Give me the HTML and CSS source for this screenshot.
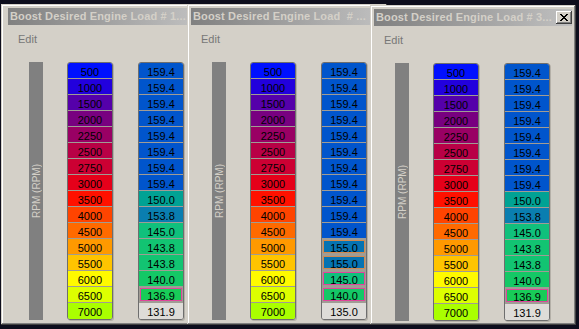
FILE: index.html
```html
<!DOCTYPE html>
<html lang="en">
<head>
    <meta charset="UTF-8">
    <title>Boost Desired Engine Load</title>
    <link rel="stylesheet" href="styles.css">
</head>
<body>

<!-- window 1 -->
<div class="window win1">
    <div class="title"><span class="caption">Boost Desired Engine Load # 1...</span></div>
    <div class="menu">Edit</div>
    <div class="table">
        <div class="axis"><span>RPM (RPM)</span></div>
        <div class="col">
            <div class="cell c500">500</div>
            <div class="cell c1000">1000</div>
            <div class="cell c1500">1500</div>
            <div class="cell c2000">2000</div>
            <div class="cell c2250">2250</div>
            <div class="cell c2500">2500</div>
            <div class="cell c2750">2750</div>
            <div class="cell c3000">3000</div>
            <div class="cell c3500">3500</div>
            <div class="cell c4000">4000</div>
            <div class="cell c4500">4500</div>
            <div class="cell c5000">5000</div>
            <div class="cell c5500">5500</div>
            <div class="cell c6000">6000</div>
            <div class="cell c6500">6500</div>
            <div class="cell c7000">7000</div>
        </div>
        <div class="col">
            <div class="cell v1594">159.4</div>
            <div class="cell v1594">159.4</div>
            <div class="cell v1594">159.4</div>
            <div class="cell v1594">159.4</div>
            <div class="cell v1594">159.4</div>
            <div class="cell v1594">159.4</div>
            <div class="cell v1594">159.4</div>
            <div class="cell v1594">159.4</div>
            <div class="cell v1500">150.0</div>
            <div class="cell v1538">153.8</div>
            <div class="cell v1450">145.0</div>
            <div class="cell v1438">143.8</div>
            <div class="cell v1438">143.8</div>
            <div class="cell v1400">140.0</div>
            <div class="cell v1369 pink">136.9</div>
            <div class="cell vlow">131.9</div>
        </div>
    </div>
</div>

<!-- window 2 -->
<div class="window win2">
    <div class="title"><span class="caption">Boost Desired Engine Load &nbsp;# ...</span></div>
    <div class="menu">Edit</div>
    <div class="table">
        <div class="axis"><span>RPM (RPM)</span></div>
        <div class="col">
            <div class="cell c500">500</div>
            <div class="cell c1000">1000</div>
            <div class="cell c1500">1500</div>
            <div class="cell c2000">2000</div>
            <div class="cell c2250">2250</div>
            <div class="cell c2500">2500</div>
            <div class="cell c2750">2750</div>
            <div class="cell c3000">3000</div>
            <div class="cell c3500">3500</div>
            <div class="cell c4000">4000</div>
            <div class="cell c4500">4500</div>
            <div class="cell c5000">5000</div>
            <div class="cell c5500">5500</div>
            <div class="cell c6000">6000</div>
            <div class="cell c6500">6500</div>
            <div class="cell c7000">7000</div>
        </div>
        <div class="col">
            <div class="cell v1594">159.4</div>
            <div class="cell v1594">159.4</div>
            <div class="cell v1594">159.4</div>
            <div class="cell v1594">159.4</div>
            <div class="cell v1594">159.4</div>
            <div class="cell v1594">159.4</div>
            <div class="cell v1594">159.4</div>
            <div class="cell v1594">159.4</div>
            <div class="cell v1594">159.4</div>
            <div class="cell v1594">159.4</div>
            <div class="cell v1594">159.4</div>
            <div class="cell v1550 orange">155.0</div>
            <div class="cell v1550 orange">155.0</div>
            <div class="cell v1450 pink">145.0</div>
            <div class="cell v1400 pink">140.0</div>
            <div class="cell vlow">135.0</div>
        </div>
    </div>
</div>

<!-- window 3 -->
<div class="window win3">
    <div class="title">
        <span class="caption">Boost Desired Engine Load # 3...</span>
        <div class="close">
            <svg width="8" height="7" viewBox="0 0 8 7" shape-rendering="crispEdges">
                <path d="M0 0h2v1h-2z M6 0h2v1h-2z M1 1h2v1h-2z M5 1h2v1h-2z M2 2h4v1h-4z M3 3h2v1h-2z M2 4h4v1h-4z M1 5h2v1h-2z M5 5h2v1h-2z M0 6h2v1h-2z M6 6h2v1h-2z" fill="#000"/>
            </svg>
        </div>
    </div>
    <div class="menu">Edit</div>
    <div class="table">
        <div class="axis"><span>RPM (RPM)</span></div>
        <div class="col">
            <div class="cell c500">500</div>
            <div class="cell c1000">1000</div>
            <div class="cell c1500">1500</div>
            <div class="cell c2000">2000</div>
            <div class="cell c2250">2250</div>
            <div class="cell c2500">2500</div>
            <div class="cell c2750">2750</div>
            <div class="cell c3000">3000</div>
            <div class="cell c3500">3500</div>
            <div class="cell c4000">4000</div>
            <div class="cell c4500">4500</div>
            <div class="cell c5000">5000</div>
            <div class="cell c5500">5500</div>
            <div class="cell c6000">6000</div>
            <div class="cell c6500">6500</div>
            <div class="cell c7000">7000</div>
        </div>
        <div class="col">
            <div class="cell v1594">159.4</div>
            <div class="cell v1594">159.4</div>
            <div class="cell v1594">159.4</div>
            <div class="cell v1594">159.4</div>
            <div class="cell v1594">159.4</div>
            <div class="cell v1594">159.4</div>
            <div class="cell v1594">159.4</div>
            <div class="cell v1594">159.4</div>
            <div class="cell v1500">150.0</div>
            <div class="cell v1538">153.8</div>
            <div class="cell v1450">145.0</div>
            <div class="cell v1438">143.8</div>
            <div class="cell v1438">143.8</div>
            <div class="cell v1400">140.0</div>
            <div class="cell v1369 pink">136.9</div>
            <div class="cell vlow">131.9</div>
        </div>
    </div>
</div>

</body>
</html>
```

FILE: styles.css
```css
* {
    padding: 0;
    margin: 0;
    box-sizing: border-box;
}
body {
    width: 579px;
    height: 329px;
    position: relative;
    overflow: hidden;
    background: #0d0d1c;
    font-family: "Liberation Sans", Arial, sans-serif;
    font-size: 11px;
}

/* classic windows */
.window {
    position: absolute;
    padding: 4px;
    background: #d4d0c8;
    box-shadow: inset -1px -1px #404040, inset 1px 1px #d4d0c8, inset -2px -2px #808080, inset 2px 2px #fff;
}
.win1 {
    left: 1px;
    top: 4px;
    width: 200px;
    height: 321px;
    padding-left: 7px;
}
.win2 {
    left: 187px;
    top: 4px;
    width: 200px;
    height: 321px;
}
.win3 {
    left: 370px;
    top: 5px;
    width: 206px;
    height: 320px;
}
.title {
    height: 17px;
    display: flex;
    align-items: center;
    background: linear-gradient(to right, #808080, #c0c0c0);
}
.title .caption {
    flex: 1;
    padding-left: 2px;
    line-height: 17px;
    white-space: nowrap;
    overflow: hidden;
    color: #d4d0c8;
    font-weight: 700;
    letter-spacing: .15px;
}
.title .close {
    width: 16px;
    height: 13px;
    flex-shrink: 0;
    display: flex;
    align-items: center;
    justify-content: center;
    background: #d4d0c8;
    box-shadow: inset -1px -1px #404040, inset 1px 1px #fff, inset -2px -2px #808080;
}
.menu {
    height: 27px;
    padding: 7px 0 0 10px;
    line-height: 14px;
    color: #777;
}

/* table */
.table {
    display: flex;
    padding: 10px 0 0 21px;
}
.axis {
    width: 14px;
    flex-shrink: 0;
    margin-right: 24px;
    display: flex;
    align-items: center;
    justify-content: center;
    background: #808080;
}
.axis span {
    writing-mode: vertical-rl;
    transform: rotate(180deg);
    font-size: 10px;
    color: #d4d0c8;
    white-space: nowrap;
}
.col {
    width: 46px;
    flex-shrink: 0;
    margin-right: 25px;
    border: 1px solid #6e6e6e;
    border-radius: 3px;
    overflow: hidden;
    box-shadow: 1px 1px 0 #b4b0a8;
}
.col:last-child {
    margin-right: 0;
}
.cell {
    height: 16px;
    line-height: 19px;
    text-align: center;
    color: #000;
    border-bottom: 1px solid #a09c94;
}
.cell:last-child {
    border-bottom: 0;
}
.pink {
    box-shadow: inset 0 0 0 1px #a09c94, inset 0 0 0 2px #e0449c;
}
.orange {
    box-shadow: inset 0 0 0 1px #a09c94, inset 0 0 0 2px #d08a50;
}

/* rpm colours */
.c500 { background: #0010ff; }
.c1000 { background: #2200dd; }
.c1500 { background: #5500aa; }
.c2000 { background: #780080; }
.c2250 { background: #990064; }
.c2500 { background: #b80046; }
.c2750 { background: #cc0033; }
.c3000 { background: #e5001a; }
.c3500 { background: #ff1100; }
.c4000 { background: #ff4400; }
.c4500 { background: #ff6a00; }
.c5000 { background: #ff9900; }
.c5500 { background: #ffc400; }
.c6000 { background: #fffa00; }
.c6500 { background: #ddff00; }
.c7000 { background: #aaff00; }

/* value colours */
.v1594 { background: #0055cc; }
.v1500 { background: #00a294; }
.v1538 { background: #0a7eb0; }
.v1550 { background: #0673b2; }
.v1450 { background: #10c07c; }
.v1438 { background: #12c472; }
.v1400 { background: #14c866; }
.v1369 { background: #18cc58; }
.vlow { background: #dedcd8; }
```
